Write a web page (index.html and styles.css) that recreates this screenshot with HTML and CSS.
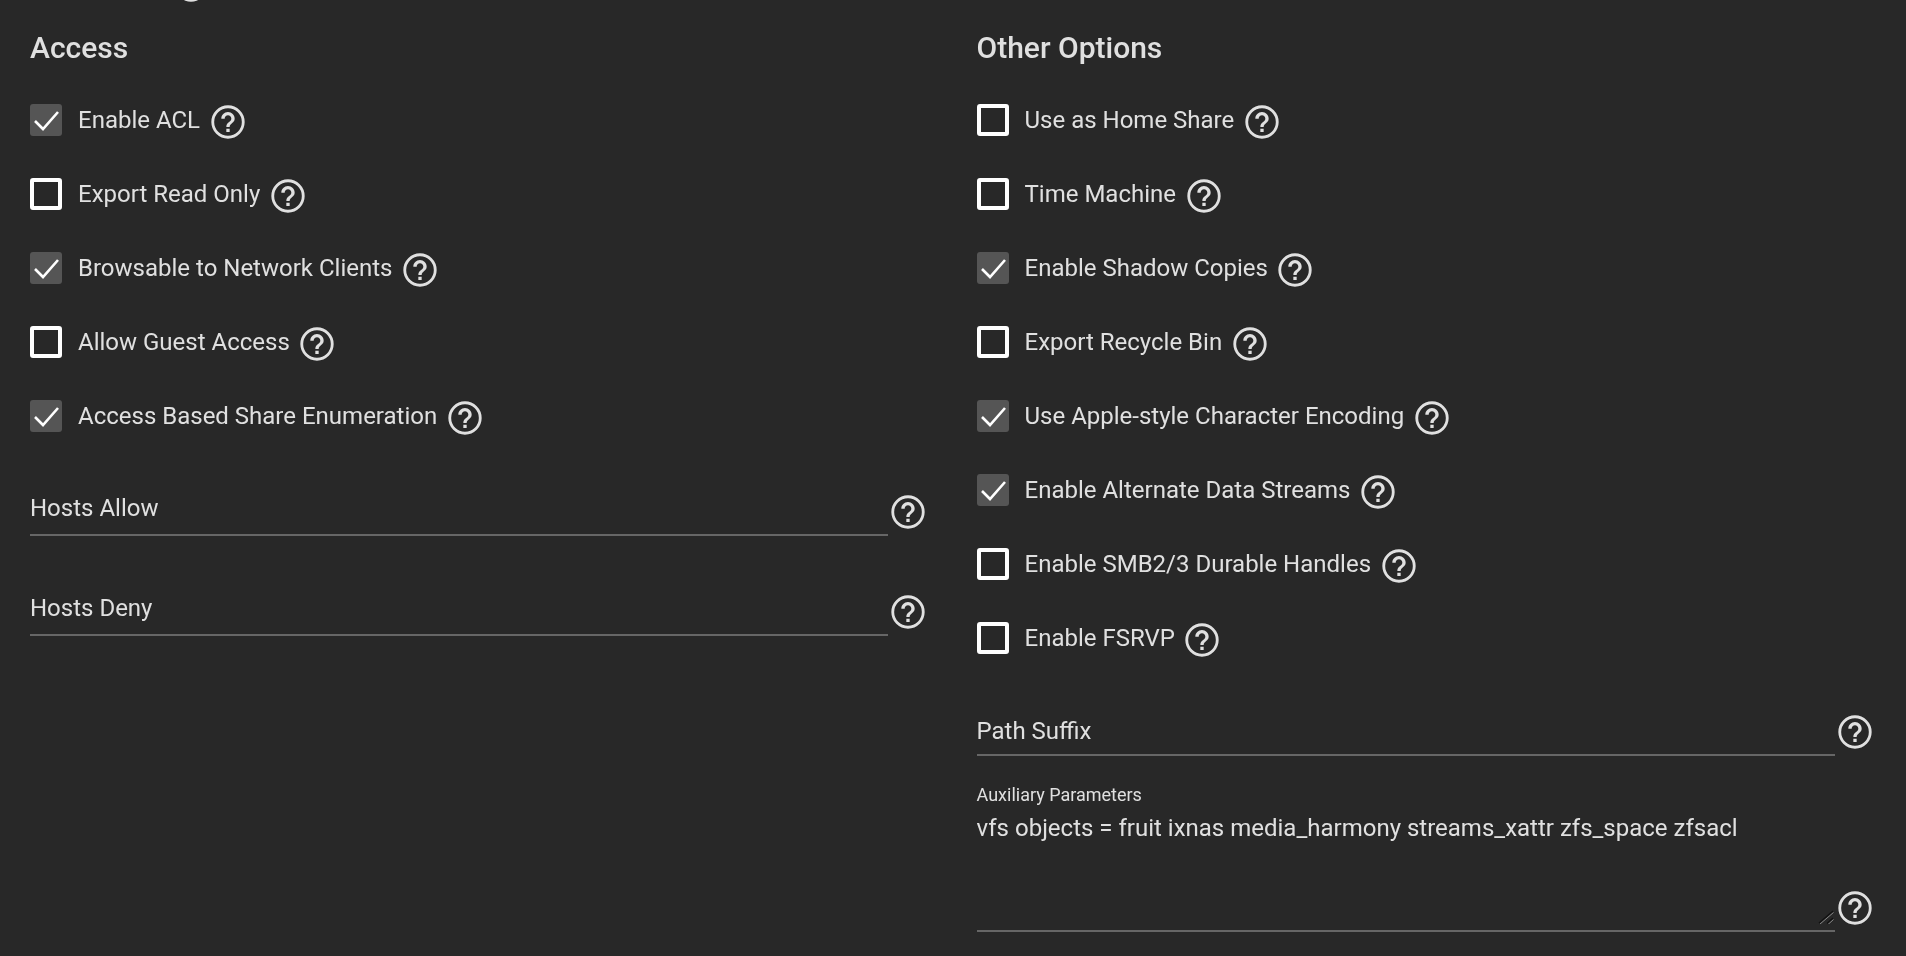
FILE: index.html
```html
<!DOCTYPE html>
<html lang="en">
<head>
<meta charset="utf-8">
<title>SMB Share Options</title>
<link rel="stylesheet" href="styles.css">
</head>
<body>
<svg class="defs" width="0" height="0" aria-hidden="true">
  <symbol id="help" viewBox="0 0 24 24"><circle class="ring" cx="12" cy="12" r="9.15"/><path d="M11 18h2v-2h-2v2zm1-12c-2.210 0-4 1.790-4 4h2c0-1.100.9-2 2-2s2 .9 2 2c0 2-3 1.750-3 5h2c0-2.250 3-2.500 3-5 0-2.210-1.790-4-4-4z"/></symbol>
  <symbol id="tick" viewBox="0 0 32 32"><path d="M5 17 13 25 28 8" fill="none" stroke="currentColor" stroke-width="2.6"/></symbol>
</svg>
<main class="page">
  <div class="scrolled-off"><svg class="help"><use href="#help"/></svg></div>
  <div class="columns">
    <section class="column">
      <h2 class="title">Access</h2>
      <div class="check-row"><span class="box on"><svg class="tick"><use href="#tick"/></svg></span><span class="label">Enable ACL</span><svg class="help"><use href="#help"/></svg></div>
      <div class="check-row"><span class="box"></span><span class="label">Export Read Only</span><svg class="help"><use href="#help"/></svg></div>
      <div class="check-row"><span class="box on"><svg class="tick"><use href="#tick"/></svg></span><span class="label">Browsable to Network Clients</span><svg class="help"><use href="#help"/></svg></div>
      <div class="check-row"><span class="box"></span><span class="label">Allow Guest Access</span><svg class="help"><use href="#help"/></svg></div>
      <div class="check-row"><span class="box on"><svg class="tick"><use href="#tick"/></svg></span><span class="label">Access Based Share Enumeration</span><svg class="help"><use href="#help"/></svg></div>
      <div class="field first-left"><div class="input">Hosts Allow</div><svg class="help"><use href="#help"/></svg></div>
      <div class="field next"><div class="input">Hosts Deny</div><svg class="help"><use href="#help"/></svg></div>
    </section>
    <section class="column">
      <h2 class="title">Other Options</h2>
      <div class="check-row"><span class="box"></span><span class="label">Use as Home Share</span><svg class="help"><use href="#help"/></svg></div>
      <div class="check-row"><span class="box"></span><span class="label">Time Machine</span><svg class="help"><use href="#help"/></svg></div>
      <div class="check-row"><span class="box on"><svg class="tick"><use href="#tick"/></svg></span><span class="label">Enable Shadow Copies</span><svg class="help"><use href="#help"/></svg></div>
      <div class="check-row"><span class="box"></span><span class="label">Export Recycle Bin</span><svg class="help"><use href="#help"/></svg></div>
      <div class="check-row"><span class="box on"><svg class="tick"><use href="#tick"/></svg></span><span class="label">Use Apple-style Character Encoding</span><svg class="help"><use href="#help"/></svg></div>
      <div class="check-row"><span class="box on"><svg class="tick"><use href="#tick"/></svg></span><span class="label">Enable Alternate Data Streams</span><svg class="help"><use href="#help"/></svg></div>
      <div class="check-row"><span class="box"></span><span class="label">Enable SMB2/3 Durable Handles</span><svg class="help"><use href="#help"/></svg></div>
      <div class="check-row"><span class="box"></span><span class="label">Enable FSRVP</span><svg class="help"><use href="#help"/></svg></div>
      <div class="field first-right"><div class="input low">Path Suffix</div><svg class="help"><use href="#help"/></svg></div>
      <div class="field aux">
        <div class="aux-input">
          <div class="aux-label">Auxiliary Parameters</div>
          <textarea class="aux-text" spellcheck="false">vfs objects = fruit ixnas media_harmony streams_xattr zfs_space zfsacl</textarea>
          <svg class="grip" viewBox="0 0 16 15" aria-hidden="true">
            <path class="grip-dark" d="M1 14 15 2M9 14.500 15 9"/>
            <path class="grip-light" d="M2 15 15.500 3.500M10 15.500 15.500 10.500"/>
          </svg>
        </div>
        <svg class="help"><use href="#help"/></svg>
      </div>
    </section>
  </div>
</main>
</body>
</html>
```
FILE: styles.css
```css
html, body {
  margin: 0;
  height: 100%;
  overflow: hidden;
  background: #282828;
}
body {
  font-family: Roboto, "Liberation Sans", sans-serif;
  color: #e0e0e0;
}
.defs {
  position: absolute;
}
.page {
  padding: 0 31px 0 30px;
  filter: blur(0.35px);
}
.scrolled-off {
  height: 40px;
  margin-top: -35px;
  padding-left: 141px;
}
.columns {
  display: grid;
  grid-template-columns: 898px 898px;
  column-gap: 48.5px;
}
.title {
  margin: 25px 0 17px;
  font-size: 30px;
  line-height: 36px;
  font-weight: 500;
}
.check-row {
  display: flex;
  align-items: center;
  height: 74px;
}
.box {
  box-sizing: border-box;
  width: 32px;
  height: 32px;
  flex: none;
  margin-right: 16px;
  border: 4px solid #fff;
  border-radius: 3px;
}
.box.on {
  display: flex;
  border: 0;
  background: #555;
  color: #fff;
}
.tick {
  width: 32px;
  height: 32px;
}
.label {
  font-size: 24px;
  line-height: 32px;
}
.help {
  display: block;
  flex: none;
  width: 40px;
  height: 40px;
  fill: #e0e0e0;
}
.ring {
  fill: none;
  stroke: #e0e0e0;
  stroke-width: 1.7;
}
.check-row .help {
  margin-left: 7.5px;
  margin-top: 3px;
}
.field {
  display: flex;
  align-items: flex-end;
  height: 64px;
}
.field .help {
  margin-bottom: 4px;
}
.first-left {
  margin-top: 19px;
}
.first-right {
  margin-top: 17px;
}
.next {
  margin-top: 36px;
}
.input {
  flex: 1;
  box-sizing: border-box;
  height: 64px;
  padding-top: 20px;
  border-bottom: 2px solid #666;
  font-size: 24px;
  line-height: 32px;
}
.input.low {
  padding-top: 23px;
}
.aux {
  height: 176px;
}
.aux-input {
  position: relative;
  flex: 1;
  box-sizing: border-box;
  height: 176px;
  padding-top: 29px;
  border-bottom: 2px solid #666;
  display: flex;
  flex-direction: column;
}
.aux-label {
  font-size: 18px;
  line-height: 20px;
}
.aux-text {
  flex: 1;
  display: block;
  box-sizing: border-box;
  width: 100%;
  margin: 0;
  padding: 7px 0 0;
  border: 0;
  outline: 0;
  background: transparent;
  color: #e0e0e0;
  font: 24px/32px Roboto, "Liberation Sans", sans-serif;
  resize: none;
}
.grip {
  position: absolute;
  right: 1px;
  bottom: 6px;
  width: 16px;
  height: 15px;
  fill: none;
}
.grip-dark {
  stroke: #111;
  stroke-width: 1.2;
}
.grip-light {
  stroke: #888;
  stroke-width: 1;
}
```
